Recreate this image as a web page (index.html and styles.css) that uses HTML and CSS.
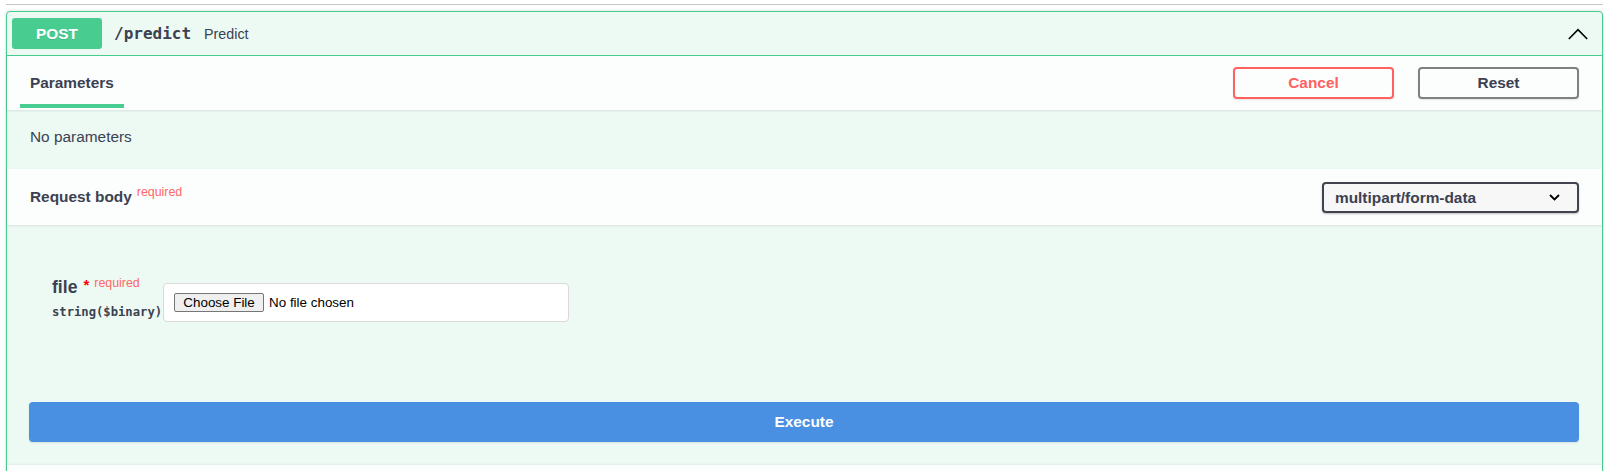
FILE: index.html
```html
<!DOCTYPE html>
<html lang="en">
<head>
<meta charset="utf-8">
<title>POST /predict</title>
<link rel="stylesheet" href="styles.css">
</head>
<body>
<div class="page">
  <div class="tagline"></div>
  <div class="opblock">
    <div class="summary">
      <span class="method">POST</span>
      <span class="path">/predict</span>
      <span class="desc">Predict</span>
      <svg class="arrow" width="20" height="12" viewBox="0 0 20 12"><polyline points="0.8,11 10,1.6 19.2,11" fill="none" stroke="#000" stroke-width="1.6"/></svg>
    </div>

    <div class="section-header tabs-header">
      <div class="tab">Parameters</div>
      <div class="btn-group">
        <button class="btn cancel">Cancel</button>
        <button class="btn reset">Reset</button>
      </div>
    </div>
    <div class="no-params">No parameters</div>

    <div class="section-header body-header">
      <div class="rb-title">Request body<span class="req">required</span></div>
      <div class="select">
        <span>multipart/form-data</span>
        <svg width="11" height="7" viewBox="0 0 11 7"><polyline points="1,1 5.5,5.5 10,1" fill="none" stroke="#000" stroke-width="1.8"/></svg>
      </div>
    </div>

    <div class="body">
      <div class="param-row">
        <div class="param-name">
          <div class="pname">file<span class="star">*</span><span class="preq">required</span></div>
          <div class="ptype">string($binary)</div>
        </div>
        <div class="file-input">
          <button class="choose">Choose File</button>
          <span class="nofile">No file chosen</span>
        </div>
      </div>
      <button class="execute">Execute</button>
    </div>
    <div class="responses"></div>
  </div>
</div>
</body>
</html>
```

FILE: styles.css
```css
* { box-sizing: border-box; }
html, body { margin: 0; padding: 0; background: #fff; }
body {
  font-family: "Liberation Sans", Arial, sans-serif;
  color: #3b4151;
  overflow: hidden;
}
.page { padding: 4px 9px 0 6px; }
.tagline { height: 1px; background: #c4c6cb; }
.opblock {
  margin-top: 6px;
  border: 1px solid #49cc90;
  border-radius: 4px;
  background: #edfaf4;
  box-shadow: 0 0 3px rgba(0,0,0,.19);
}
.summary {
  height: 44px;
  border-bottom: 1px solid #49cc90;
  display: flex;
  align-items: center;
  padding: 0 5px;
}
.method {
  width: 90px;
  height: 31px;
  background: #49cc90;
  border-radius: 3px;
  color: #fff;
  font-weight: bold;
  font-size: 15.4px;
  display: flex;
  align-items: center;
  justify-content: center;
  text-shadow: 0 1px 0 rgba(0,0,0,.1);
}
.path {
  margin-left: 12px;
  font-family: "DejaVu Sans Mono", monospace;
  font-weight: bold;
  font-size: 16px;
}
.desc {
  margin-left: 13px;
  font-size: 14.3px;
  flex: 1;
}
.arrow { margin-right: 9px; }

.section-header {
  background: rgba(255,255,255,.8);
  box-shadow: 0 1px 2px rgba(0,0,0,.1);
  display: flex;
  position: relative;
}
.tabs-header {
  height: 54px;
  padding: 0 23px 0 13px;
  align-items: flex-start;
  justify-content: space-between;
}
.tab {
  font-weight: bold;
  font-size: 15.4px;
  line-height: 20px;
  padding: 17px 10px 11px;
  border-bottom: 4px solid #49cc90;
}
.btn-group { display: flex; gap: 24px; margin-top: 11px; }
.btn {
  width: 161px;
  height: 32px;
  background: transparent;
  border-radius: 4px;
  font-family: "Liberation Sans", Arial, sans-serif;
  font-weight: bold;
  font-size: 15.4px;
  box-shadow: 0 1px 2px rgba(0,0,0,.1);
}
.cancel { border: 2px solid #ff6060; color: #ff6060; }
.reset { border: 2px solid #808080; color: #3b4151; }

.no-params {
  height: 59px;
  padding: 17px 23px 0;
  font-size: 15.4px;
  line-height: 20px;
}

.body-header {
  height: 56px;
  padding: 0 23px;
  align-items: center;
  justify-content: space-between;
}
.rb-title {
  font-weight: bold;
  font-size: 15.4px;
}
.req {
  color: #ff6666;
  font-size: 12.4px;
  font-weight: normal;
  margin-left: 5px;
  position: relative;
  top: -6px;
}
.select {
  width: 257px;
  height: 31px;
  margin-top: 1px;
  border: 2px solid #41444e;
  border-radius: 4px;
  background: #f7f7f7;
  box-shadow: 0 1px 2px 0 rgba(0,0,0,.25);
  display: flex;
  align-items: center;
  justify-content: space-between;
  padding: 0 17px 0 11px;
  font-weight: bold;
  font-size: 15.4px;
}

.body {
  height: 240px;
  padding: 52px 23px 0 22px;
}
.param-row {
  display: flex;
  align-items: flex-start;
  padding-left: 23px;
}
.param-name { padding-right: 1px; }
.pname {
  font-weight: bold;
  font-size: 17.6px;
  line-height: 20px;
}
.star {
  color: #ff0000;
  font-size: 15px;
  margin-left: 6px;
  position: relative;
  top: -3px;
}
.preq {
  color: #ff6666;
  font-size: 12.4px;
  font-weight: normal;
  margin-left: 5px;
  position: relative;
  top: -6px;
}
.ptype {
  margin-top: 3px;
  font-family: "DejaVu Sans Mono", monospace;
  font-weight: bold;
  font-size: 12.2px;
  line-height: 20px;
  white-space: nowrap;
}
.file-input {
  margin-top: 6px;
  width: 406px;
  height: 39px;
  background: #fff;
  border: 1px solid #d9d9d9;
  border-radius: 4px;
  display: flex;
  align-items: center;
  padding-left: 10px;
  gap: 5px;
}
.choose {
  height: 19px;
  width: 90px;
  padding: 0;
  background: #efefef;
  border: 1px solid #767676;
  border-radius: 2px;
  font-family: "Liberation Sans", Arial, sans-serif;
  font-size: 13.4px;
  color: #000;
}
.nofile { font-size: 13.4px; color: #000; }
.execute {
  display: block;
  width: 100%;
  height: 40px;
  margin-top: 80px;
  background: #4990e2;
  border: 0;
  border-radius: 4px;
  color: #fff;
  font-family: "Liberation Sans", Arial, sans-serif;
  font-weight: bold;
  font-size: 15.4px;
  box-shadow: 0 1px 2px rgba(0,0,0,.1);
}
.responses {
  height: 60px;
  background: rgba(255,255,255,.8);
  box-shadow: 0 -1px 2px rgba(0,0,0,.05);
}
```
